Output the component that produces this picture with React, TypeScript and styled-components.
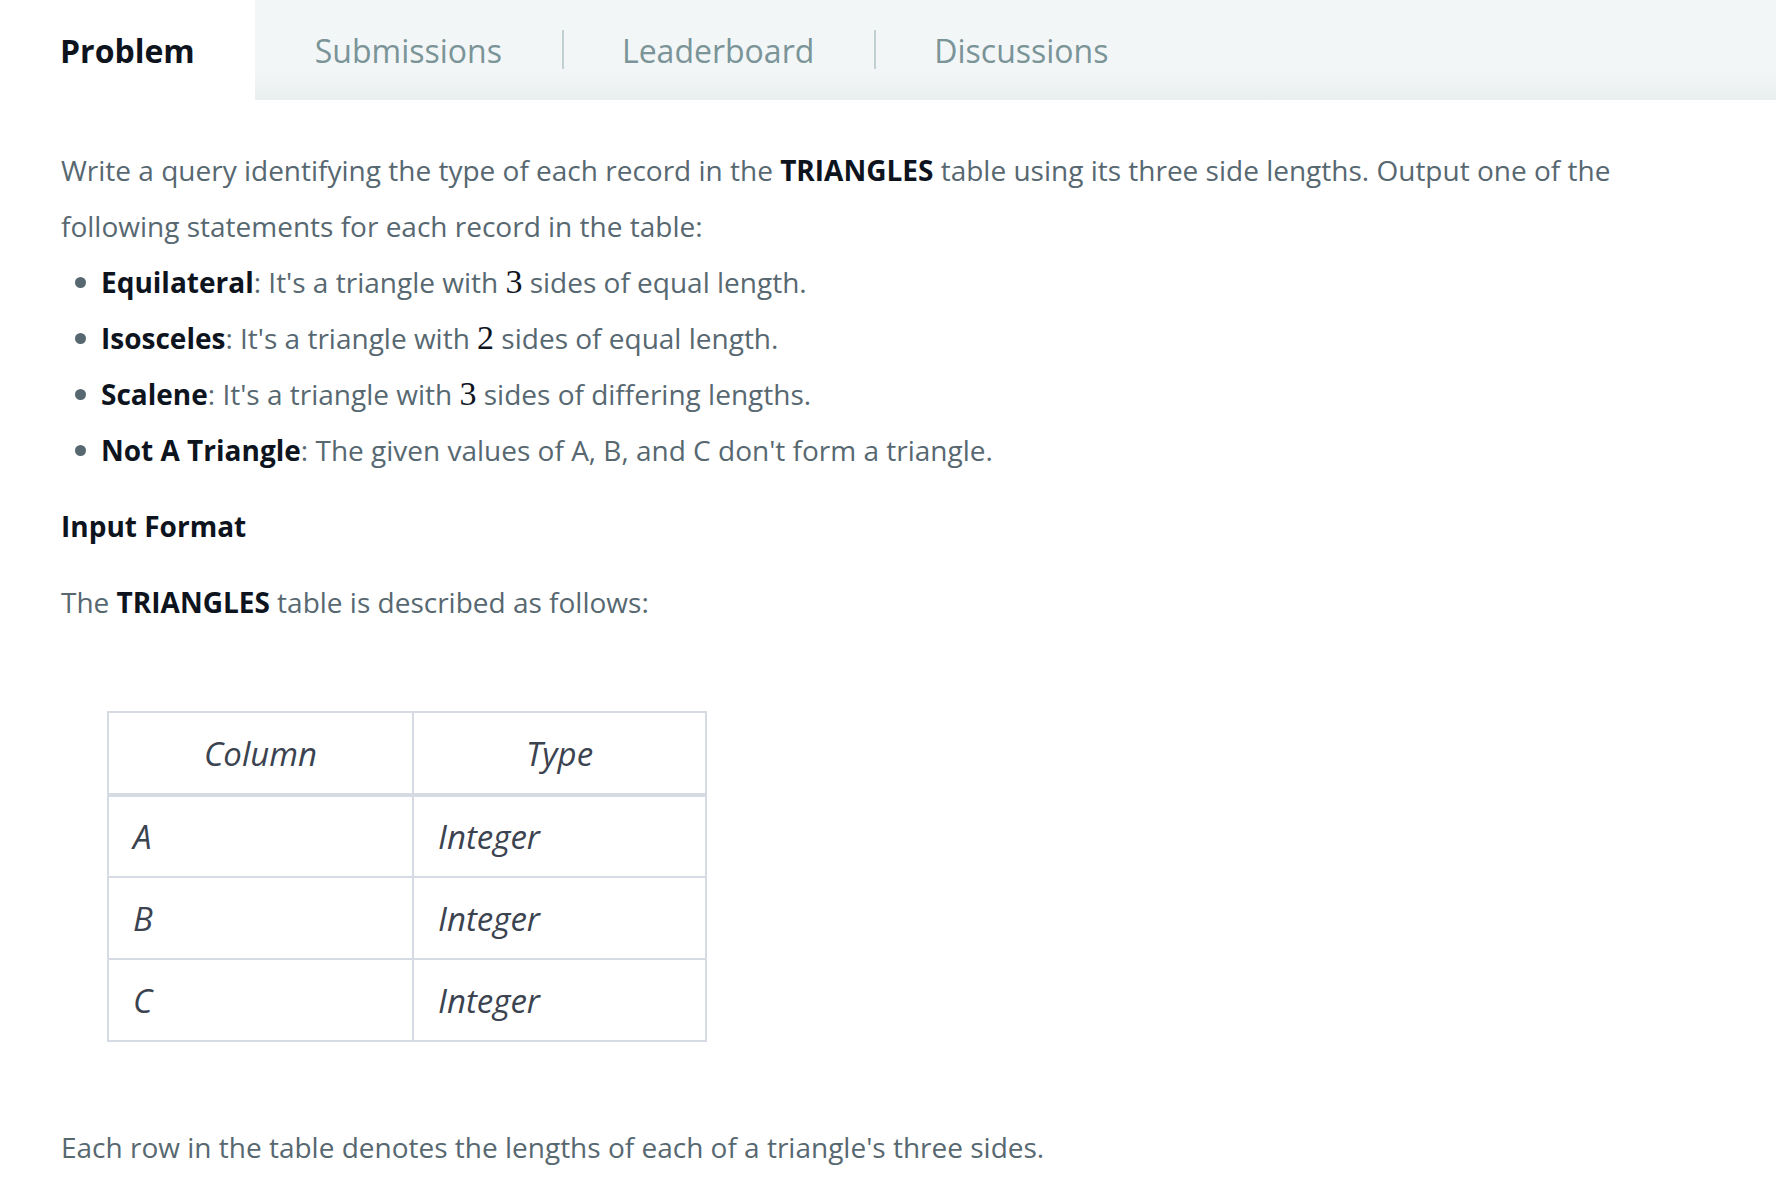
import React from "react";
import styled, { createGlobalStyle } from "styled-components";

const Global = createGlobalStyle`
  html, body { margin: 0; padding: 0; background: #ffffff; }
  body { font-family: "Open Sans", "Noto Sans", sans-serif; }
`;

const Page = styled.div`
  width: 1776px;
  min-height: 1198px;
  background: #fff;
`;

const TabBar = styled.nav`
  display: flex;
  align-items: center;
  height: 100px;
  background: linear-gradient(to bottom, #f3f6f7 0%, #f3f6f7 72%, #e9eeef 100%);
`;

const Tab = styled.div<{ $active?: boolean; $divider?: boolean }>`
  position: relative;
  height: 100%;
  display: flex;
  align-items: center;
  padding: 0 60px;
  font-size: 32px;
  font-weight: ${(p) => (p.$active ? 700 : 400)};
  color: ${(p) => (p.$active ? "#0e141e" : "#7a9497")};
  background: ${(p) => (p.$active ? "#ffffff" : "transparent")};
  ${(p) =>
    p.$divider &&
    `
    &::before {
      content: "";
      position: absolute;
      left: 0;
      top: 30px;
      height: 39px;
      width: 2px;
      background: #c1d0d2;
    }
  `}
`;

const Content = styled.main`
  padding: 42px 61px 0 61px;
  color: #576871;
  font-size: 28px;
  line-height: 56px;
`;

const Para = styled.p<{ $top?: number }>`
  margin: ${(p) => p.$top ?? 0}px 0 0 0;
`;

const Strong = styled.strong`
  font-weight: 700;
  color: #0e141e;
`;

const MathNum = styled.span`
  font-family: "Liberation Serif", "DejaVu Serif", serif;
  font-size: 34px;
  color: #0e141e;
`;

const List = styled.ul`
  margin: 0;
  padding-left: 40px;
  list-style: none;
`;

const Item = styled.li`
  position: relative;
  &::before {
    content: "";
    position: absolute;
    left: -26px;
    top: 23px;
    width: 11px;
    height: 11px;
    border-radius: 50%;
    background: #576871;
  }
`;

const Heading = styled.h3`
  margin: 20px 0 0 0;
  font-size: 28px;
  font-weight: 700;
  color: #0e141e;
  line-height: 56px;
`;

const Table = styled.table`
  margin: 81px 0 0 46px;
  border-collapse: collapse;
  border: 2px solid #d6dae2;
  font-style: italic;
  font-size: 33px;
  line-height: 1;
  color: #3b4350;
`;

const Th = styled.th<{ $w: number }>`
  width: ${(p) => p.$w}px;
  height: 83px;
  box-sizing: border-box;
  border: 2px solid #d6dae2;
  border-bottom-width: 4px;
  font-weight: 400;
  text-align: center;
  padding: 0;
`;

const Td = styled.td`
  height: 82px;
  box-sizing: border-box;
  border: 2px solid #d6dae2;
  padding: 0 0 0 24px;
  text-align: left;
`;

const rows = ["A", "B", "C"];

export default function App() {
  return (
    <Page>
      <Global />
      <TabBar>
        <Tab $active>Problem</Tab>
        <Tab>Submissions</Tab>
        <Tab $divider>Leaderboard</Tab>
        <Tab $divider>Discussions</Tab>
      </TabBar>
      <Content>
        <Para>
          Write a query identifying the type of each record in the <Strong>TRIANGLES</Strong> table using its three
          side lengths. Output one of the following statements for each record in the table:
        </Para>
        <List>
          <Item>
            <Strong>Equilateral</Strong>: It's a triangle with <MathNum>3</MathNum> sides of equal length.
          </Item>
          <Item>
            <Strong>Isosceles</Strong>: It's a triangle with <MathNum>2</MathNum> sides of equal length.
          </Item>
          <Item>
            <Strong>Scalene</Strong>: It's a triangle with <MathNum>3</MathNum> sides of differing lengths.
          </Item>
          <Item>
            <Strong>Not A Triangle</Strong>: The given values of A, B, and C don't form a triangle.
          </Item>
        </List>
        <Heading>Input Format</Heading>
        <Para $top={20}>
          The <Strong>TRIANGLES</Strong> table is described as follows:
        </Para>
        <Table>
          <thead>
            <tr>
              <Th $w={305}>Column</Th>
              <Th $w={293}>Type</Th>
            </tr>
          </thead>
          <tbody>
            {rows.map((r) => (
              <tr key={r}>
                <Td>{r}</Td>
                <Td>Integer</Td>
              </tr>
            ))}
          </tbody>
        </Table>
        <Para $top={77}>Each row in the table denotes the lengths of each of a triangle's three sides.</Para>
      </Content>
    </Page>
  );
}
